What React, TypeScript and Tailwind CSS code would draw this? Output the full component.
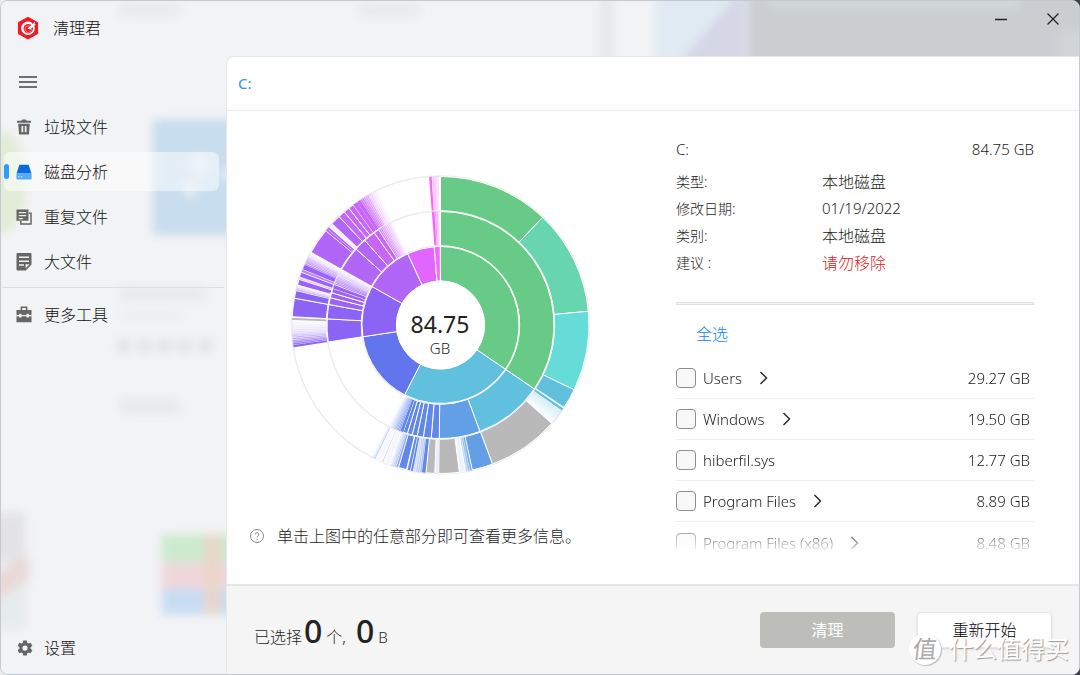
import React from "react";

type Slice = [start: number, end: number, color: string, opacity?: number];

const GREEN = "#67cb87";
const TEAL = "#66d5b0";
const AQUA = "#65dcd7";
const CYAN = "#62c0df";
const SKY = "#629fe6";
const BLUE = "#6287ea";
const INDIGO = "#6275ed";
const VIOLET = "#8b63f5";
const PURPLE = "#9d63f6";
const ORCHID = "#b266f8";
const MAGENTA = "#c966fa";
const PINK = "#e066ff";
const ROSE = "#f866fa";
const GRAY = "#b9b9b9";

function stripes(start: number, end: number, count: number, color: string, from: number, to: number): Slice[] {
  const step = (end - start) / count;
  return Array.from({ length: count }, (_, i): Slice => {
    const t = count > 1 ? i / (count - 1) : 0;
    return [start + i * step, start + (i + 0.8) * step, color, from + (to - from) * t];
  });
}

const innerRing: Slice[] = [
  [0, 124.3, GREEN],
  [124.3, 207.2, CYAN],
  [207.2, 261.4, INDIGO],
  [261.4, 299.3, VIOLET],
  [299.3, 335.3, ORCHID],
  [335.3, 355.4, PINK],
  [355.4, 359.8, ROSE],
];

const middleRing: Slice[] = [
  [0, 124.3, GREEN],
  [124.3, 159.7, CYAN],
  [159.7, 180.6, SKY],
  [180.6, 184.7, BLUE],
  [184.7, 188.7, BLUE],
  [188.7, 191.9, BLUE],
  [191.9, 194.5, BLUE],
  [194.5, 197, BLUE],
  [197, 199.2, BLUE],
  [199.2, 200.8, BLUE],
  ...stripes(201, 207, 9, BLUE, 0.8, 0.08),
  [261.4, 273.1, VIOLET],
  [273.1, 280.4, VIOLET],
  [280.4, 283.9, PURPLE],
  [283.9, 286.5, PURPLE],
  [286.5, 288.8, PURPLE],
  [288.8, 290.6, PURPLE],
  ...stripes(291, 299, 10, PURPLE, 0.8, 0.08),
  [299.3, 312, ORCHID],
  [312, 318.2, ORCHID],
  [318.2, 324.3, MAGENTA],
  [324.3, 327, MAGENTA],
  ...stripes(327.2, 335, 9, MAGENTA, 0.8, 0.08),
  [355.6, 357, ROSE],
  ...stripes(357.2, 359.6, 3, ROSE, 0.7, 0.3),
];

const outerRing: Slice[] = [
  [0, 43.5, GREEN],
  [43.5, 84.7, TEAL],
  [84.7, 115.9, AQUA],
  [115.9, 123.7, CYAN],
  [124.2, 125.2, CYAN],
  ...stripes(125.5, 131.3, 8, CYAN, 0.3, 0.06),
  [131.5, 159.5, GRAY],
  [159.5, 167.6, SKY],
  ...stripes(167.8, 170.4, 3, SKY, 0.85, 0.4),
  [170.4, 172.5, SKY, 0.12],
  [172.7, 180.7, GRAY],
  [180.8, 182, BLUE, 0.14],
  [182.2, 185.6, GRAY],
  [185.8, 187.2, BLUE],
  ...stripes(187.3, 190.6, 4, BLUE, 0.5, 0.3),
  [190.7, 191.5, BLUE],
  [191.8, 192.8, BLUE],
  [193.2, 196.4, BLUE],
  [196.6, 197.3, BLUE, 0.7],
  ...stripes(197.5, 200, 4, BLUE, 0.45, 0.15),
  [200, 202.6, BLUE, 0.07],
  [202.8, 203.1, GRAY, 0.7],
  [203.3, 205.8, BLUE, 0.06],
  [205.9, 206.4, BLUE, 0.35],
  [206.5, 207.2, BLUE, 0.15],
  [261.4, 262.3, VIOLET],
  ...stripes(262.4, 267, 7, VIOLET, 0.85, 0.25),
  ...stripes(267, 271.6, 6, VIOLET, 0.2, 0.06),
  [271.9, 272.8, GRAY],
  [273.2, 280.4, VIOLET],
  [280.4, 283.4, VIOLET],
  ...stripes(283.5, 285.4, 3, PURPLE, 0.5, 0.15),
  [285.6, 287.9, PURPLE],
  ...stripes(288, 288.9, 2, PURPLE, 0.4, 0.2),
  [289, 290.6, PURPLE],
  [290.9, 291.8, PURPLE, 0.75],
  [292, 293.9, PURPLE],
  ...stripes(294, 299, 8, PURPLE, 0.75, 0.06),
  [299.3, 309.4, ORCHID],
  [309.5, 310.3, ORCHID],
  [310.4, 311.2, ORCHID],
  [311.4, 312.8, ORCHID, 0.1],
  [313, 316.9, ORCHID],
  [316.9, 319.6, MAGENTA],
  [319.6, 321.9, MAGENTA],
  [321.9, 324, MAGENTA],
  [324, 325.8, MAGENTA],
  [325.8, 327.3, MAGENTA],
  ...stripes(327.4, 331, 5, MAGENTA, 0.9, 0.55),
  ...stripes(331, 335, 5, MAGENTA, 0.3, 0.05),
  [355.6, 356.6, ROSE],
  ...stripes(356.9, 359.6, 4, ROSE, 0.45, 0.2),
];

function arcPath(r0: number, r1: number, start: number, end: number) {
  const at = (r: number, deg: number) => {
    const a = (deg * Math.PI) / 180;
    return `${(150.5 + r * Math.sin(a)).toFixed(2)} ${(150 - r * Math.cos(a)).toFixed(2)}`;
  };
  const large = end - start > 180 ? 1 : 0;
  return `M${at(r0, start)} L${at(r1, start)} A${r1} ${r1} 0 ${large} 1 ${at(r1, end)} L${at(r0, end)} A${r0} ${r0} 0 ${large} 0 ${at(r0, start)}Z`;
}

function Ring({ slices, r0, r1 }: { slices: Slice[]; r0: number; r1: number }) {
  return (
    <g>
      <circle cx="150.5" cy="150" r={r1 + 0.5} fill="none" stroke="#ececec" strokeWidth="1.4" />
      {slices.map(([start, end, color, opacity], i) => (
        <path
          key={i}
          d={arcPath(r0, r1, start, end)}
          fill={color}
          fillOpacity={opacity ?? 1}
          stroke={end - start > 2 ? "#fff" : "none"}
          strokeWidth="1"
        />
      ))}
      <circle cx="150.5" cy="150" r={r0} fill="none" stroke="#fff" strokeWidth="1" />
    </g>
  );
}

function DiskChart() {
  return (
    <svg viewBox="0 0 300 300" className="size-[300px]" role="img" aria-label="84.75 GB">
      <Ring slices={outerRing} r0={114} r1={148.5} />
      <Ring slices={middleRing} r0={79} r1={113.5} />
      <Ring slices={innerRing} r0={44} r1={78.5} />
      <text x="150" y="158" textAnchor="middle" className="fill-[#222] text-[23px] font-normal">84.75</text>
      <text x="150" y="179" textAnchor="middle" className="fill-[#222] text-[15px]">GB</text>
    </svg>
  );
}

function LogoIcon() {
  return (
    <svg viewBox="0 0 22 24" className="h-6 w-[22px]" aria-hidden="true">
      <path d="M11 2 20 7V17.200L11 22.200 2 17.200V7Z" fill="#ee1c25" stroke="#ee1c25" strokeWidth="2.200" strokeLinejoin="round" />
      <circle cx="11" cy="12.300" r="6.800" fill="#fff" />
      <circle cx="11.300" cy="12.600" r="4.700" fill="#ee1c25" />
      <path d="M13.500 10.700A3.300 3.300 0 1 0 14.600 13" fill="none" stroke="#fff" strokeWidth=".6" opacity=".7" />
      <path d="M14.800 6.600 17.300 10.700 21 8 18 4.500Z" fill="#ee1c25" />
      <path d="M10.600 12.400 18.200 5.600 17.600 8 18.800 8.600 13.200 13.400Z" fill="#fff" />
    </svg>
  );
}

function TrashIcon() {
  return (
    <svg viewBox="0 0 16 16" className="size-4" aria-hidden="true">
      <path fill="#666" fillRule="evenodd" d="M6 .5h4l.6 1.3H15v2H1v-2h4.400ZM2.200 4.800h11.600l-.9 10.700H3.100ZM5.500 7v6.200h1.700V7Zm3.300 0v6.200h1.700V7Z" />
    </svg>
  );
}

function DiskIcon() {
  return (
    <svg viewBox="0 0 16 16" className="size-4" aria-hidden="true">
      <path d="M3.400.8h9.200L15.500 9.500H.5Z" fill="#0a6cda" />
      <path d="M.4 9.400h15.200v5.200a1 1 0 0 1-1 1H1.400a1 1 0 0 1-1-1Z" fill="#58aaf8" />
      <path d="M2.300 12h1.200v1.200H2.300ZM5 12h1.200v1.200H5Z" fill="#c6e2ff" />
    </svg>
  );
}

function DuplicateIcon() {
  return (
    <svg viewBox="0 0 16 16" className="size-4" aria-hidden="true">
      <path fill="#666" fillRule="evenodd" d="M.5.500h12v11.200H.5ZM2.800 3v1.300h7.400V3Zm0 3v1.300h7.400V6Zm0 3v1.200h4V9Z" />
      <path d="M13 4.300h2v10.800H4.800V12" fill="none" stroke="#666" strokeWidth="1.500" />
    </svg>
  );
}

function LargeFileIcon() {
  return (
    <svg viewBox="0 0 16 18" className="h-[18px] w-4" aria-hidden="true">
      <path fill="#666" fillRule="evenodd" d="M1.500 0h13q1 0 1 1v10.500L9.800 17.500h-8.300q-1 0-1-1V1q0-1 1-1ZM3 3.600v1.500h10V3.600Zm0 3.800v1.500h10V7.400Zm0 3.900v1.500h5v-1.500Zm6.600 0v3.900l3.900-3.900Z" />
    </svg>
  );
}

function ToolboxIcon() {
  return (
    <svg viewBox="0 0 16 17" className="h-[17px] w-4" aria-hidden="true">
      <path fill="#666" fillRule="evenodd" d="M4.600.500h6.800v3.400h4.100v5H13V7.700h-2.500v1.200h-5V7.700H3v1.200H.5v-5h4.100ZM6.200 2v1.900h3.600V2ZM.5 10.200H3v1.300h2.500v-1.300h5v1.300H13v-1.300h2.500v6H.5Z" />
    </svg>
  );
}

function GearIcon() {
  return (
    <svg viewBox="0 0 24 24" className="size-[18px]" aria-hidden="true">
      <path fill="#666" d="M19.430 12.980c.04-.32.07-.64.07-.98s-.03-.66-.07-.98l2.110-1.650c.19-.15.24-.42.12-.64l-2-3.460c-.12-.22-.39-.3-.61-.22l-2.490 1c-.52-.4-1.080-.73-1.690-.98l-.38-2.650A.488.488 0 0 0 14 2h-4c-.25 0-.46.18-.49.42l-.38 2.650c-.61.25-1.170.59-1.690.98l-2.490-1c-.23-.09-.49 0-.61.22l-2 3.460c-.13.22-.07.49.12.64l2.110 1.650c-.04.32-.07.65-.07.98s.03.66.07.98l-2.110 1.650c-.19.15-.24.42-.12.64l2 3.460c.12.22.39.3.61.22l2.490-1c.52.4 1.080.73 1.690.98l.38 2.650c.03.24.24.42.49.42h4c.25 0 .46-.18.49-.42l.38-2.650c.61-.25 1.170-.59 1.690-.98l2.490 1c.23.09.49 0 .61-.22l2-3.460c.12-.22.07-.49-.12-.64ZM12 15.500A3.500 3.500 0 1 1 12 8.500a3.500 3.500 0 0 1 0 7Z" />
    </svg>
  );
}

function Backdrop() {
  return (
    <svg viewBox="0 0 1080 675" preserveAspectRatio="xMidYMid slice" className="absolute inset-0 size-full" aria-hidden="true">
      <defs>
        <filter id="soft" x="-30%" y="-30%" width="160%" height="160%"><feGaussianBlur stdDeviation="5" /></filter>
      </defs>
      <rect width="1080" height="675" fill="#f2f3f5" />
      <g filter="url(#soft)">
        <rect x="600" y="-20" width="14" height="90" fill="#e6e7e9" />
        <rect x="655" y="-20" width="92" height="100" fill="#dfeaf2" />
        <path d="M745-15v90h-75Z" fill="#d5d6e6" />
        <rect x="748" y="-20" width="350" height="100" fill="#cbced1" />
        <rect x="770" y="-22" width="250" height="30" fill="#d1d9d4" />
        <rect x="1060" y="30" width="40" height="40" fill="#d2d5d8" />
        <rect x="152" y="119" width="90" height="116" fill="#c8dded" />
        <circle cx="199" cy="165" r="11" fill="#dbe8f4" />
        <circle cx="190" cy="190" r="8" fill="#e2ecf5" />
        <circle cx="226" cy="174" r="7" fill="#e2ecf5" />
        <ellipse cx="0" cy="182" rx="26" ry="52" fill="#e2ecd8" />
        <rect x="118" y="2" width="62" height="14" fill="#e9eaec" />
        <rect x="358" y="2" width="62" height="14" fill="#e9eaec" />
        <rect x="120" y="286" width="84" height="15" fill="#e8e9eb" />
        <rect x="120" y="310" width="64" height="12" fill="#eeeff1" />
        {[123, 144, 164, 184, 205].map((x) => <circle key={x} cx={x} cy="346" r="8" fill="#e3e4e6" />)}
        <rect x="119" y="398" width="60" height="16" fill="#e8e9eb" />
        <rect x="-10" y="513" width="34" height="50" fill="#e3e3e5" />
        <path d="M-10 575 28 555v25L-10 605Z" fill="#e8d9d8" />
        <path d="M-10 605 26 583v47H-10Z" fill="#e6ebed" />
        <rect x="161" y="535" width="80" height="28" fill="#cbeacd" />
        <rect x="161" y="563" width="80" height="26" fill="#efd6da" />
        <rect x="161" y="589" width="80" height="26" fill="#c8ddf3" />
        <rect x="204" y="535" width="15" height="80" fill="#ebd6c9" />
      </g>
    </svg>
  );
}

function NavItem({ icon, label, active }: { icon: React.ReactNode; label: string; active?: boolean }) {
  return (
    <a
      href="#"
      aria-current={active ? "page" : undefined}
      className={`relative flex h-[39px] items-center rounded-md pl-3 text-[16px] text-[#111] ${active ? "bg-white/50" : ""}`}
    >
      {active && <span className="absolute left-0 h-[15px] w-[5px] rounded-full bg-[#2f9bff]" />}
      <span className="flex w-7 items-center">{icon}</span>
      {label}
    </a>
  );
}

const details = [
  { name: "类型:", value: "本地磁盘" },
  { name: "修改日期:", value: "01/19/2022", latin: true },
  { name: "类别:", value: "本地磁盘" },
  { name: "建议 :", value: "请勿移除", warn: true },
];

const entries = [
  { name: "Users", size: "29.27 GB", folder: true },
  { name: "Windows", size: "19.50 GB", folder: true },
  { name: "hiberfil.sys", size: "12.77 GB", folder: false },
  { name: "Program Files", size: "8.89 GB", folder: true },
  { name: "Program Files (x86)", size: "8.48 GB", folder: true },
];

export default function App() {
  return (
    <div className="h-screen min-h-[600px] bg-[linear-gradient(to_right,#e8eaec_50%,#3f4149_50%)] font-['Noto_Sans','Noto_Sans_CJK_SC',sans-serif] font-light text-[#1c1c1c]">
      <div className="relative flex h-full flex-col overflow-hidden rounded-lg border border-[#c3c9d1] bg-[#f2f3f5]">
        <Backdrop />
        <header className="relative flex h-[54px] shrink-0 items-center justify-between pl-4">
          <div className="flex items-center gap-[14px]">
            <LogoIcon />
            <h1 className="text-[16px] text-[#111]">清理君</h1>
          </div>
          <div className="flex h-full items-start">
            <button type="button" aria-label="最小化" className="flex h-9 w-[52px] items-center justify-center">
              <svg viewBox="0 0 14 14" className="size-[14px]" aria-hidden="true"><path d="M1 7.500h12" stroke="#222" strokeWidth="1.500" /></svg>
            </button>
            <button type="button" aria-label="关闭" className="flex h-9 w-[52px] items-center justify-center">
              <svg viewBox="0 0 14 14" className="size-[14px]" aria-hidden="true"><path d="m1.500 1.500 11 11m0-11-11 11" stroke="#222" strokeWidth="1.300" /></svg>
            </button>
          </div>
        </header>

        <div className="relative flex min-h-0 flex-1">
          <aside className="flex w-[225px] shrink-0 flex-col pb-[7px]">
            <button type="button" aria-label="菜单" className="ml-[11px] mt-[9px] flex size-9 items-center pl-[7px]">
              <svg viewBox="0 0 18 12" className="h-3 w-[18px]" aria-hidden="true"><path d="M0 1h18M0 6h18M0 11h18" stroke="#444" strokeWidth="1.400" /></svg>
            </button>
            <nav className="mt-[7px] flex flex-1 flex-col">
              <div className="flex flex-col gap-1.5 pl-[3px] pr-[7px]">
                <NavItem icon={<TrashIcon />} label="垃圾文件" />
                <NavItem icon={<DiskIcon />} label="磁盘分析" active />
                <NavItem icon={<DuplicateIcon />} label="重复文件" />
                <NavItem icon={<LargeFileIcon />} label="大文件" />
              </div>
              <div className="mx-0.5 mb-[7px] mt-1.5 h-px bg-[#dcdee0]" />
              <div className="pl-[3px] pr-[7px]"><NavItem icon={<ToolboxIcon />} label="更多工具" /></div>
              <div className="mt-auto pl-[3px] pr-[7px]"><NavItem icon={<GearIcon />} label="设置" /></div>
            </nav>
          </aside>

          <main className="mt-px flex min-w-0 flex-1 flex-col rounded-tl-lg border-l border-t border-[#e3e6ea] bg-white">
            <div className="flex h-[54px] shrink-0 items-center border-b border-[#e9edf2] px-[11px]">
              <a href="#" className="text-[15px] font-normal text-[#2f94f5]">C:</a>
            </div>

            <div className="flex min-h-0 flex-1">
              <section className="flex min-w-0 flex-1 flex-col items-center pt-16">
                <DiskChart />
                <p className="mt-[49px] flex items-center gap-3 self-start pl-[22px] text-[16px] leading-6">
                  <svg viewBox="0 0 16 16" className="size-4" aria-hidden="true">
                    <circle cx="8" cy="8" r="6.500" fill="none" stroke="#888" strokeWidth="1" />
                    <path d="M6.200 6.500a1.800 1.800 0 1 1 2.600 1.600Q8 8.500 8 9.500" fill="none" stroke="#888" strokeWidth="1" />
                    <circle cx="8" cy="11.400" r=".7" fill="#888" />
                  </svg>
                  单击上图中的任意部分即可查看更多信息。
                </p>
              </section>

              <section className="ml-6 mr-[45px] flex w-[358px] shrink-0 flex-col pb-[35px] pt-[25px]">
                <div className="flex h-[27px] items-center justify-between text-[15px]">
                  <h2>C:</h2>
                  <span>84.75 GB</span>
                </div>
                <dl className="mt-[5px]">
                  {details.map((d) => (
                    <div key={d.name} className="flex h-[27px] items-center">
                      <dt className="w-[146px] text-[14px]">{d.name}</dt>
                      <dd className={d.warn ? "text-[16px] text-[#e02020]" : d.latin ? "text-[15px]" : "text-[16px]"}>{d.value}</dd>
                    </div>
                  ))}
                </dl>
                <div className="mt-[26px] h-[3px] shrink-0 border border-[#e0e0e0] bg-[#f4f4f4]" />
                <button type="button" className="ml-5 mt-[17px] self-start text-[16px] leading-6 text-[#0f86f5]">全选</button>
                <ul className="mt-3 min-h-0 flex-1 overflow-hidden [mask-image:linear-gradient(to_bottom,#000_88%,transparent_103%)]">
                  {entries.map((e, i) => (
                    <li key={e.name} className="flex h-[41px] items-center border-b border-[#eeeeee] pr-1 text-[15px] last:border-b-0">
                      <input
                        id={`entry-${i}`}
                        type="checkbox"
                        className="size-5 shrink-0 appearance-none rounded border border-[#8c8c8c] bg-[#f8f8f8] checked:bg-[#2f94f5]"
                      />
                      <label htmlFor={`entry-${i}`} className="ml-[7px] leading-5">{e.name}</label>
                      {e.folder && (
                        <button type="button" aria-label={`打开 ${e.name}`} className="ml-[17px]">
                          <svg viewBox="0 0 10 14" className="h-[14px] w-[10px]" aria-hidden="true">
                            <path d="m1.500 1 6 6-6 6" fill="none" stroke="#222" strokeWidth="1.400" />
                          </svg>
                        </button>
                      )}
                      <span className="ml-auto leading-5">{e.size}</span>
                    </li>
                  ))}
                </ul>
              </section>
            </div>

            <footer className="flex h-[90px] shrink-0 items-center border-t-2 border-[#e6e6e6] bg-[#f5f5f5] pl-[27px] pr-[27px]">
              <p className="flex items-baseline pt-0.5 text-[16px]">
                已选择
                <b className="ml-0.5 text-[32px] font-medium leading-9 text-[#222]">0</b>
                <span className="ml-1">个,</span>
                <b className="ml-2.5 text-[32px] font-medium leading-9 text-[#222]">0</b>
                <span className="ml-1 text-[15px]">B</span>
              </p>
              <div className="ml-auto flex gap-[22px]">
                <button type="button" disabled className="h-9 w-[135px] rounded bg-[#bdbeb9] text-[16px] font-normal text-white">清理</button>
                <button type="button" className="h-9 w-[135px] rounded border border-[#e6e6e6] bg-white text-[16px] text-[#000] shadow-sm">重新开始</button>
              </div>
            </footer>
          </main>
        </div>

        <div className="pointer-events-none absolute bottom-[9px] right-2.5 flex items-center gap-2 text-white">
          <span className="flex size-8 items-center justify-center rounded-full bg-white text-[24px] font-normal leading-none text-[#aaa] shadow-[1px_1px_1px_#bbb]">
            <span className="-skew-x-6">值</span>
          </span>
          <span className="text-[24px] font-normal leading-8 [text-shadow:1px_1px_1px_#999]">什么值得买</span>
        </div>
      </div>
    </div>
  );
}
